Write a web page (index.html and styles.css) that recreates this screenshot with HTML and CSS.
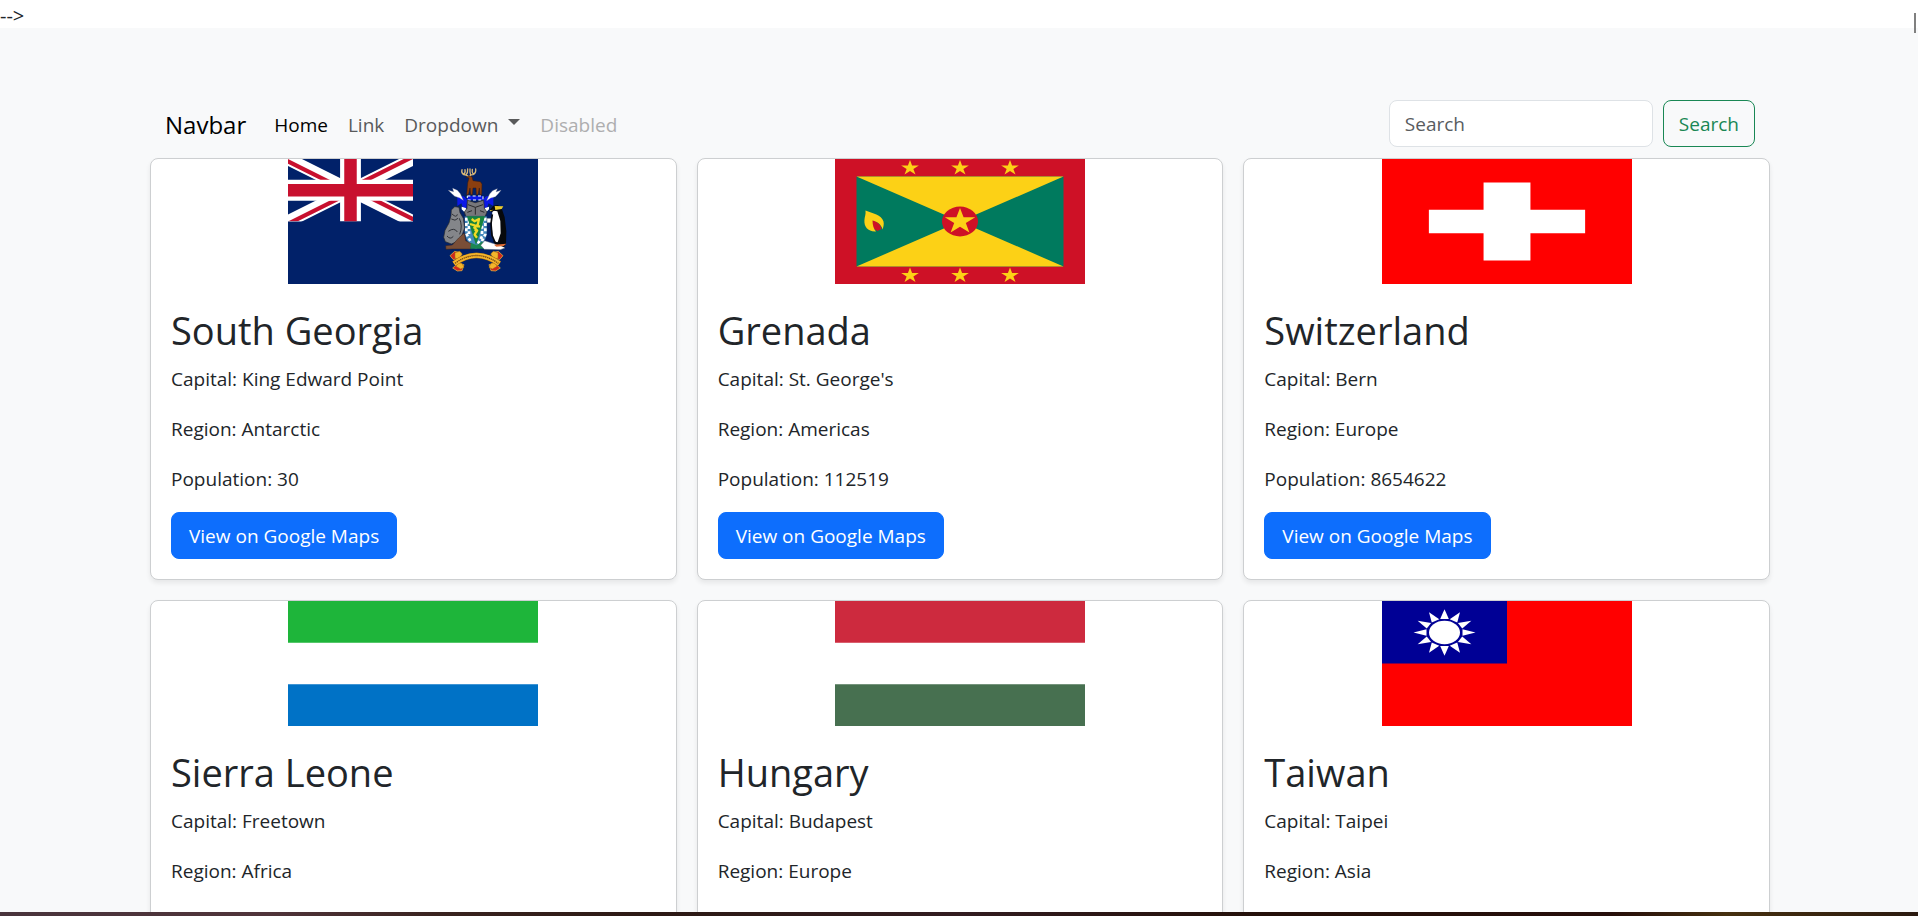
FILE: index.html
```html
<!DOCTYPE html>
<html lang="en">
<head>
<meta charset="utf-8">
<meta name="viewport" content="width=device-width, initial-scale=1">
<title>Countries</title>
<link rel="stylesheet" href="styles.css">
</head>
<body>
<div class="stray">--&gt;</div>
<span class="edge-mark"></span>
<main class="page">
  <div class="container">
    <nav class="navbar">
      <a class="brand" href="#">Navbar</a>
      <ul class="nav-list">
        <li><a class="nav-link active" href="#">Home</a></li>
        <li><a class="nav-link" href="#">Link</a></li>
        <li><a class="nav-link dropdown" href="#">Dropdown</a></li>
        <li><a class="nav-link disabled" aria-disabled="true">Disabled</a></li>
      </ul>
      <form class="search">
        <input class="search-input" type="search" placeholder="Search" aria-label="Search">
        <button class="btn btn-outline" type="submit">Search</button>
      </form>
    </nav>

    <div class="cards">
      <article class="card">
        <svg class="flag" viewBox="0 0 250 125" role="img" aria-label="Flag of South Georgia">
          <defs>
            <clipPath id="canton"><path d="M0 0h60v30H0z"/></clipPath>
            <clipPath id="saltire"><path d="M30 15h30v15zv15H0zH0V0zV0h30z"/></clipPath>
          </defs>
          <path fill="#012169" d="M0 0h250v125H0z"/>
          <g transform="scale(2.0833)" clip-path="url(#canton)" fill="none">
            <path d="M0 0l60 30M60 0L0 30" stroke="#fff" stroke-width="6"/>
            <path d="M0 0l60 30M60 0L0 30" stroke="#c8102e" stroke-width="4" clip-path="url(#saltire)"/>
            <path d="M30 0v30M0 15h60" stroke="#fff" stroke-width="10"/>
            <path d="M30 0v30M0 15h60" stroke="#c8102e" stroke-width="6"/>
          </g>
          <g transform="translate(-8 -9) scale(.33333)" stroke-linejoin="round">
            <!-- stag crest -->
            <path fill="none" stroke="#d8b878" stroke-width="4" stroke-linecap="round" d="M565 79q-6-4-14-5-8-6-5-15M551 74q6-5 4-15M558 75q6-6 5-18M570 79q0-5 9-5 10-5 8-17M580 73q-5-6-3-15M572 75q-3-7-2-18"/>
            <path fill="#8b3f10" stroke="#3b1b0a" stroke-width="1.5" d="M558 84l7-6 11 2 3 12 22 3 5 7-1 32h-5l-2-20-4 20h-5l-1-20h-9l-2 20h-5l-2-20-5 20h-5l3-35 4-15-8-3z"/>
            <!-- mantling and wings -->
            <path fill="#0b18e8" d="M532 139h20l10 12-3 25-10-3-5-13-12 8zM640 139h-22l-10 12 3 25 10-3 5-13 14 8z"/>
            <path fill="#fff" stroke="#99a" stroke-width="1" d="M505 121l16 4-3-10 14 6 9 10 9 20-12-8-14-4-8-8zM663 121l-15 5 4-10-14 6-9 10-9 20 12-8 14-4 8-8z"/>
            <path fill="#fff" d="M545 170l12 4 6 10-10 2-8-8zM627 170l-12 4-6 10 10 2 8-8z"/>
            <!-- helmet -->
            <path fill="#0b18e8" stroke="#fff" stroke-width="3" stroke-dasharray="9 7" d="M562 138h47v12h-47z"/>
            <path fill="#77777b" stroke="#252525" stroke-width="2" d="M562 151l24 7 25-7 2 24 8 11-6 14h-57l-5-14 8-11z"/>
            <path fill="none" stroke="#29292b" stroke-width="3" d="M564 164l22 8 23-8M586 172v22M562 187l14-5M600 182l13 5"/>
            <!-- shield -->
            <path fill="#4389bd" stroke="#203868" stroke-width="1.5" d="M554 199h67v47q-1 34-33 51-33-16-34-51z"/>
            <path fill="none" stroke="#fff" stroke-width="8" stroke-dasharray="9 7" d="M559 203v48l12 22M567 212v40M606 211v48l-14 25M616 203v50l-12 24"/>
            <path fill="#16833e" d="M561 199h54l-27 87z"/>
            <path fill="none" stroke="#f1da26" stroke-width="7" d="M575 207l9 7 13-7-4 18-10 8 8 8-7 13 7 9M570 222l14 4 16 4M584 239l10 5"/>
            <!-- seal supporter -->
            <path fill="#84868a" stroke="#25272b" stroke-width="2" d="M514 180l10-10 13 2 3 16 10 17 4 29-8 22-13 18-19 8-18-7-5-13 4-21 12-22 6-22z"/>
            <path fill="none" stroke="#303237" stroke-width="3" d="M516 192q14 13 16 1M514 207q12 8 20-2M505 244q18-13 27 2M501 258q10 12 19 1M538 205q11 22 1 48"/>
            <path fill="#7a4e37" stroke="#37241c" stroke-width="1.5" d="M497 287l20-2 19-21 17-15 4 23 18 10-3 15h-55l-19 1z"/>
            <path fill="#1b8753" d="M573 278l17 8 17-12 12 22h-48z"/>
            <!-- penguin supporter -->
            <path fill="#fff" stroke="#53606c" stroke-width="1.5" d="M602 286l12-14 24 8 28 7 9 7-14 5-48-1zM621 205h17v13h-17z"/>
            <path fill="#fff" d="M637 183l18-3 9 23 4 31-5 34-13 12-11-13-4-38z"/>
            <path fill="#07090c" d="M630 179l10-12 14-2 12 13 8 24 5 42-1 38-6 9-26-8-8-9 15 3 9-27-1-37-9-29-10-2-7 5z"/>
            <path fill="none" stroke="#07090c" stroke-width="5" d="M637 193l-4 28 3 35 10 23"/>
            <path fill="#eacb2d" d="M644 168l26 1-5 8-19 3zM629 181l12-2-10 5z"/>
            <path fill="#dd6c37" d="M642 284l37-3-8 7-22 2z"/>
            <!-- motto ribbon -->
            <path fill="#cf281f" stroke="#edc83b" stroke-width="2" d="M510 317l14-13 18 4-5 16-17 5zM669 317l-14-13-18 4 5 16 17 5zM518 354l14-12 20 2-6 18-14 1zM661 354l-14-12-20 2 6 18 14 1z"/>
            <path fill="#f4b52b" stroke="#a46b12" stroke-width="1.5" d="M525 308l14-4 8 8-10 16-12-4zM654 308l-14-4-8 8 10 16 12-4zM532 338l14 2 6 12-10 5-14-8zM647 338l-14 2-6 12 10 5 14-8z"/>
            <path fill="none" stroke="#a46b12" stroke-width="17" d="M522 341q67-50 136 0"/>
            <path fill="none" stroke="#f4b52b" stroke-width="14" d="M522 341q67-50 136 0"/>
            <path fill="none" stroke="#704413" stroke-width="4" stroke-dasharray="4 2" d="M525 340q64-47 130 0"/>
          </g>
        </svg>
        <div class="card-body">
          <h1 class="card-title">South Georgia</h1>
          <p>Capital: King Edward Point</p>
          <p>Region: Antarctic</p>
          <p>Population: 30</p>
          <a class="btn btn-primary" href="#">View on Google Maps</a>
        </div>
      </article>

      <article class="card">
        <svg class="flag" viewBox="0 0 250 125" role="img" aria-label="Flag of Grenada">
          <defs>
            <path id="star" fill="#fcd116" d="M0-1l.2245.691h.727l-.588.427.225.691L0 .382l-.588.427.225-.691-.588-.427h.727z"/>
          </defs>
          <path fill="#ce1126" d="M0 0h250v125H0z"/>
          <path fill="#007a5e" d="M21.5 17.5h207v90h-207z"/>
          <path fill="#fcd116" d="M21.5 17.5h207l-207 90h207z"/>
          <ellipse cx="125" cy="62.5" rx="18" ry="15" fill="#ce1126"/>
          <use href="#star" transform="translate(125 62.5) scale(16 13.5)"/>
          <use href="#star" transform="translate(75 9) scale(9.3 8)"/>
          <use href="#star" transform="translate(125 9) scale(9.3 8)"/>
          <use href="#star" transform="translate(175 9) scale(9.3 8)"/>
          <use href="#star" transform="translate(75 116.5) scale(9.3 8)"/>
          <use href="#star" transform="translate(125 116.5) scale(9.3 8)"/>
          <use href="#star" transform="translate(175 116.5) scale(9.3 8)"/>
          <path fill="#ce1126" d="M37 61q8 2 9.500 9l-4 2-5-3z"/>
          <path fill="#fcd116" d="M30.500 51.500c7 3 16 4 18 11 .8 3-.5 6-.8 8-1.500-5-5-8-10.200-9 .2 5 1 8 3.500 11-8 .5-12-5-11.600-11 .2-4 1.600-6 1.100-10z"/>
        </svg>
        <div class="card-body">
          <h1 class="card-title">Grenada</h1>
          <p>Capital: St. George's</p>
          <p>Region: Americas</p>
          <p>Population: 112519</p>
          <a class="btn btn-primary" href="#">View on Google Maps</a>
        </div>
      </article>

      <article class="card">
        <svg class="flag" viewBox="0 0 32 32" preserveAspectRatio="none" role="img" aria-label="Flag of Switzerland">
          <path fill="#f00" d="M0 0h32v32H0z"/>
          <path fill="#fff" d="M13 6h6v7h7v6h-7v7h-6v-7H6v-6h7z"/>
        </svg>
        <div class="card-body">
          <h1 class="card-title">Switzerland</h1>
          <p>Capital: Bern</p>
          <p>Region: Europe</p>
          <p>Population: 8654622</p>
          <a class="btn btn-primary" href="#">View on Google Maps</a>
        </div>
      </article>

      <article class="card">
        <svg class="flag" viewBox="0 0 3 3" preserveAspectRatio="none" role="img" aria-label="Flag of Sierra Leone">
          <path fill="#fff" d="M0 0h3v3H0z"/>
          <path fill="#1eb53a" d="M0 0h3v1H0z"/>
          <path fill="#0072c6" d="M0 2h3v1H0z"/>
        </svg>
        <div class="card-body">
          <h1 class="card-title">Sierra Leone</h1>
          <p>Capital: Freetown</p>
          <p>Region: Africa</p>
        </div>
      </article>

      <article class="card">
        <svg class="flag" viewBox="0 0 3 3" preserveAspectRatio="none" role="img" aria-label="Flag of Hungary">
          <path fill="#fff" d="M0 0h3v3H0z"/>
          <path fill="#cd2a3e" d="M0 0h3v1H0z"/>
          <path fill="#477050" d="M0 2h3v1H0z"/>
        </svg>
        <div class="card-body">
          <h1 class="card-title">Hungary</h1>
          <p>Capital: Budapest</p>
          <p>Region: Europe</p>
        </div>
      </article>

      <article class="card">
        <svg class="flag" viewBox="0 0 250 125" role="img" aria-label="Flag of Taiwan">
          <defs>
            <path id="ray" d="M0-1l.14.42h-.28z"/>
          </defs>
          <path fill="#f00" d="M0 0h250v125H0z"/>
          <path fill="#000095" d="M0 0h125v62.500H0z"/>
          <g fill="#fff" transform="translate(62.500 31.500) scale(31 23.300)">
            <circle r=".5"/>
            <use href="#ray"/>
            <use href="#ray" transform="rotate(30)"/>
            <use href="#ray" transform="rotate(60)"/>
            <use href="#ray" transform="rotate(90)"/>
            <use href="#ray" transform="rotate(120)"/>
            <use href="#ray" transform="rotate(150)"/>
            <use href="#ray" transform="rotate(180)"/>
            <use href="#ray" transform="rotate(210)"/>
            <use href="#ray" transform="rotate(240)"/>
            <use href="#ray" transform="rotate(270)"/>
            <use href="#ray" transform="rotate(300)"/>
            <use href="#ray" transform="rotate(330)"/>
          </g>
        </svg>
        <div class="card-body">
          <h1 class="card-title">Taiwan</h1>
          <p>Capital: Taipei</p>
          <p>Region: Asia</p>
        </div>
      </article>
    </div>
  </div>
</main>
<div class="bottom-strip"></div>
</body>
</html>
```

FILE: styles.css
```css
* {
  box-sizing: border-box;
}

body {
  margin: 0;
  height: 100vh;
  overflow: hidden;
  background: #fff;
  color: #212529;
  font-family: "Segoe UI", "Open Sans", "Noto Sans", sans-serif;
  font-size: 19px;
  line-height: 30px;
}

.stray {
  padding-top: 4px;
  font-size: 20px;
  line-height: 24px;
}

.edge-mark {
  position: absolute;
  top: 13px;
  right: 2px;
  width: 2px;
  height: 20px;
  background: #808080;
}

.page {
  padding: 62px 20px 60px 22px;
  background: #f8f9fa;
}

.container {
  max-width: 1620px;
  margin: 0 auto;
}

.navbar {
  display: flex;
  align-items: center;
  padding: 10px 15px 11px;
}

.brand {
  margin-right: 18px;
  padding-top: 2px;
  color: #000;
  font-size: 24px;
  text-decoration: none;
}

.nav-list {
  display: flex;
  flex: 1;
  margin: 0;
  padding: 2px 0 0;
  list-style: none;
}

.nav-link {
  display: flex;
  align-items: center;
  padding: 0 10px;
  color: #595a5b;
  text-decoration: none;
}

.nav-link.active {
  color: #000;
}

.nav-link.disabled {
  color: #aeaeaf;
}

.dropdown::after {
  content: "";
  margin: 0 0 6px 10px;
  border: 6px solid transparent;
  border-top-color: currentColor;
  border-bottom: 0;
}

.search {
  display: flex;
  gap: 10px;
}

.search-input {
  width: 264px;
  padding: 9px 15px 7px;
  border: 1px solid #dee2e6;
  border-radius: 8px;
  background: #fff;
  color: #212529;
  font: inherit;
  line-height: 29px;
  appearance: none;
}

.search-input::placeholder {
  color: #595c5f;
  opacity: 1;
}

.btn {
  display: inline-block;
  padding: 9px 15px 7px;
  border: 1px solid;
  border-radius: 8px;
  font: inherit;
  line-height: 29px;
  text-decoration: none;
}

.btn-outline {
  border-color: #198754;
  background: transparent;
  color: #198754;
}

.btn-primary {
  padding-right: 17px;
  padding-left: 17px;
  border-color: #0d6efd;
  background: #0d6efd;
  color: #fff;
}

.cards {
  display: grid;
  grid-template-columns: repeat(3, 1fr);
  grid-auto-rows: 1fr;
  gap: 20px;
}

.card {
  display: flex;
  flex-direction: column;
  border: 1px solid #cdcfd1;
  border-radius: 8px;
  background: #fff;
  box-shadow: 0 3px 5px rgba(0, 0, 0, 0.075);
}

.flag {
  display: block;
  align-self: center;
  width: 250px;
  height: 125px;
}

.card-body {
  display: flex;
  flex-direction: column;
  align-items: flex-start;
  padding: 22px 20px 20px;
}

.card-title {
  margin: 0 0 10px;
  font-size: 38px;
  font-weight: 400;
  line-height: 48px;
}

.card-body p {
  margin: 0 0 20px;
}

.card-body p:last-of-type {
  margin-bottom: 18px;
}

.bottom-strip {
  position: fixed;
  right: 0;
  bottom: 0;
  left: 0;
  height: 4px;
  background: linear-gradient(90deg, #49343c, #50343a 14%, #39231f 23%, #2c1914 34%, #321c20 50%, #241009 66%, #260e0a 84%, #46300f 90%, #2b1a10);
}
```
